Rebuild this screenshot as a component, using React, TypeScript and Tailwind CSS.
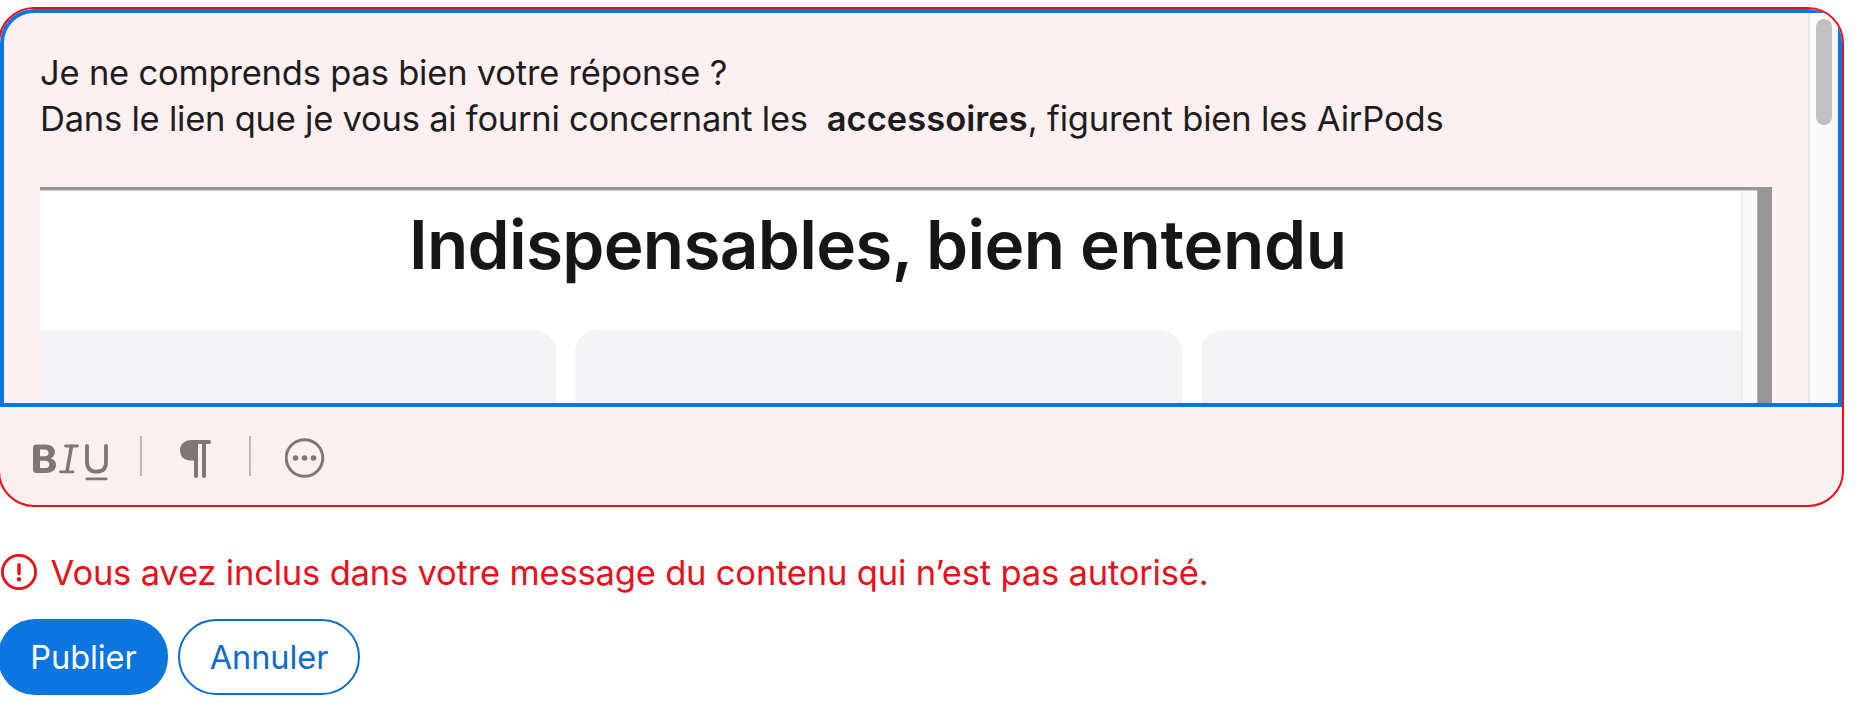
import React from "react";

const Separator = () => <div className="h-10 w-0.5 bg-[#babbbb]" />;

const BoldIcon = () => (
	<svg width="24" height="30" viewBox="0 0 24 30" fill="#7f7777">
		<path
			fillRule="evenodd"
			d="M3.5 0.5H12.5C18 .5 22 3.5 22 8C22 11 20.300 13 17.800 14.200C21 15.200 23 17.600 23 20.800C23 26 19 29 13 29H3.500Q0 29 0 25.500V4Q0 .5 3.500 .5ZM7 5.500V12.200H11.500C14 12.200 15.500 11 15.500 8.900C15.500 6.700 14 5.500 11.500 5.500ZM7 16.800V24H12C14.800 24 16.300 22.800 16.300 20.400C16.300 18 14.800 16.800 12 16.800Z"
		/>
	</svg>
);

const ItalicIcon = () => (
	<svg
		width="20"
		height="30"
		viewBox="0 0 20 30"
		fill="none"
		stroke="#7f7777"
		strokeLinecap="round"
	>
		<path strokeWidth="2.800" d="M6.500 2H18.500M1.500 27.800H14" />
		<path strokeWidth="3.600" d="M12.500 2L8 27.500" />
	</svg>
);

const UnderlineIcon = () => (
	<svg
		width="24"
		height="37"
		viewBox="0 0 24 37"
		fill="none"
		stroke="#7f7777"
		strokeLinecap="round"
	>
		<path
			strokeWidth="3.800"
			d="M2 2V18C2 24.500 5.500 27.700 11.500 27.700C17.500 27.700 21 24.500 21 18V2"
		/>
		<path strokeWidth="2.800" d="M1.800 34.800H21.200" />
	</svg>
);

const ParagraphIcon = () => (
	<svg width="31" height="38" viewBox="0 0 31 38" fill="#7f7777">
		<path d="M11.500 0H29Q31 0 31 2T29 4H26V36Q26 38 24 38T22 36V4H18V36Q18 38 16 38T14 36V20.500H10.500C4 20.500 0 16.500 0 10.500C0 4.500 4.500 0 11.500 0Z" />
	</svg>
);

const MoreIcon = () => (
	<svg width="40" height="40" viewBox="0 0 40 40" fill="#7f7777">
		<circle cx="19.500" cy="20" r="18.300" fill="none" stroke="#7f7777" strokeWidth="3" />
		<circle cx="10.500" cy="20" r="2.800" />
		<circle cx="19.500" cy="20" r="2.800" />
		<circle cx="28.500" cy="20" r="2.800" />
	</svg>
);

const AlertIcon = () => (
	<svg width="36" height="36" viewBox="0 0 36 36" fill="none" stroke="#e8101a">
		<circle cx="18" cy="18" r="16.600" strokeWidth="2.800" />
		<path d="M18 10.800V19.500" strokeWidth="3.400" strokeLinecap="round" />
		<circle cx="18" cy="25.200" r="2.200" fill="#e8101a" stroke="none" />
	</svg>
);

// Screenshot pasted inside the message, cut off by the editor's bottom edge
const PastedImage = () => (
	<div className="flex h-[216px] w-[1732px] border-t-[3px] border-[#969696]">
		<div className="flex w-[1701px] flex-col border-t border-[#d0d0d0] bg-white">
			<h2 className="h-[139px] pt-[13px] pl-[369px] text-[67.500px] leading-[82px] font-semibold whitespace-nowrap text-[#161617]">
				<span className="tracking-[-0.720px]">Indispensables,</span>
				<span className="tracking-[-0.600px] [word-spacing:-3px]"> bien </span>
				<span className="ml-[2px] tracking-[-0.300px]">entendu</span>
			</h2>
			<div className="flex flex-1 gap-[19px]">
				<div className="w-[516px] rounded-tr-[22px] bg-[#f4f4f6]" />
				<div className="w-[607px] rounded-t-[22px] bg-[#f4f4f6]" />
				<div className="flex-1 rounded-tl-[22px] bg-[#f4f4f6]" />
			</div>
		</div>
		<div className="w-4 border-t border-l-2 border-t-[#d0d0d0] border-l-[#eeeeee] bg-[#fafafa]" />
		<div className="flex-1 border-l border-l-[#b4b4b4] bg-[#969696]" />
	</div>
);

const Editor = () => (
	<div className="h-[500px] w-[1846px] overflow-hidden rounded-[36px] border-2 border-[#eb0d18] bg-[#fcf0f0]">
		<div className="flex h-[398px] overflow-hidden rounded-tl-[34px] border-4 border-[#0b75e0]">
			<div className="flex-1 overflow-hidden pt-[37px] pl-9 text-[34.500px] leading-[46px] text-[#1d1d1f]">
				<p className="whitespace-nowrap tracking-[-0.200px]">
					Je ne comprends pas bien votre réponse ?
				</p>
				<p className="mb-[45px] whitespace-pre">
					<span className="tracking-[-0.230px]">
						Dans le lien que je vous ai fourni concernant les{"  "}
					</span>
					<b className="font-semibold tracking-[0.030px]">accessoires</b>
					<span className="tracking-[-0.160px]">, figurent bien les AirPods</span>
				</p>
				<PastedImage />
			</div>
			<div className="w-[30px] border-x-2 border-l-[#e8e8e8] border-r-[#ededed] bg-[#fafafa] pt-1.5 pl-1.5">
				<div className="h-[106px] w-4 rounded-full bg-[#c1c1c1]" />
			</div>
		</div>
		<div className="flex items-start pt-[29px] pl-[33px]">
			<div className="flex pt-2">
				<BoldIcon />
				<div className="ml-0.5">
					<ItalicIcon />
				</div>
				<div className="ml-1.5">
					<UnderlineIcon />
				</div>
			</div>
			<div className="ml-[31px]">
				<Separator />
			</div>
			<div className="mt-1 ml-[38px]">
				<ParagraphIcon />
			</div>
			<div className="ml-[38px]">
				<Separator />
			</div>
			<div className="mt-0.5 ml-[34px]">
				<MoreIcon />
			</div>
		</div>
	</div>
);

const App = () => {
	return (
		<div className="h-[708px] w-full overflow-hidden bg-white font-['Inter',sans-serif]">
			<div className="-ml-0.5 pt-[7px]">
				<Editor />
				<div className="mt-[47px] ml-[3px] flex h-9 items-center gap-[13.500px] text-[34.500px] text-[#e8101a]">
					<AlertIcon />
					<p className="pt-0.5 whitespace-nowrap tracking-[-0.175px]">
						Vous avez inclus dans votre message du contenu qui n’est pas autorisé.
					</p>
				</div>
				<div className="mt-[29px] flex gap-[10px] text-[32.500px] tracking-[-0.070px]">
					<button className="h-[76px] w-[170px] rounded-[37px] bg-[#0b75e0] pt-0.5 pl-px text-white">
						Publier
					</button>
					<button className="h-[76px] w-[182px] rounded-[38px] border-2 border-[#0f6bc9] pt-0.5 text-[#0f6bc9]">
						Annuler
					</button>
				</div>
			</div>
		</div>
	);
};

export default App;
